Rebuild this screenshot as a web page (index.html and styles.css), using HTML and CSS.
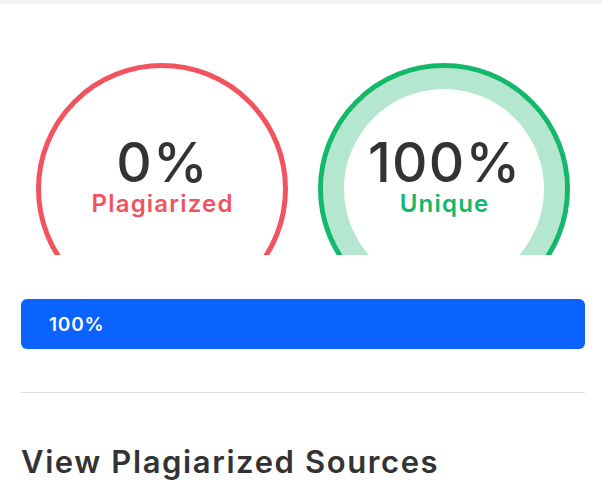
FILE: index.html
```html
<!DOCTYPE html>
<html lang="en">
<head>
<meta charset="utf-8">
<title>Plagiarism Report</title>
<link rel="stylesheet" href="styles.css">
</head>
<body>
<div class="topband"></div>
<main class="report">
  <section class="gauges">
    <div class="gauge">
      <div class="ring ring-red">
        <div class="value">0%</div>
        <div class="label label-red">Plagiarized</div>
      </div>
    </div>
    <div class="gauge">
      <div class="ring ring-green">
        <div class="value">100%</div>
        <div class="label label-green">Unique</div>
      </div>
    </div>
  </section>
  <div class="bar"><span class="bar-text">100%</span></div>
  <hr class="divider">
  <h2 class="heading">View Plagiarized Sources</h2>
</main>
</body>
</html>
```
FILE: styles.css
```css
html, body {
  margin: 0;
  padding: 0;
  background: #ffffff;
}
body {
  font-family: Inter, "Open Sans", sans-serif;
  color: #333333;
  overflow: hidden;
}
.topband {
  height: 4px;
  background: #f2f3f5;
}
.report {
  padding: 0 17px 0 21px;
}
.gauges {
  display: flex;
  justify-content: center;
  gap: 30px;
  margin-top: 59px;
}
.gauge {
  width: 252px;
  height: 192px;
  overflow: hidden;
}
.ring {
  box-sizing: border-box;
  width: 252px;
  height: 252px;
  border-radius: 50%;
  border: 5px solid;
  display: flex;
  flex-direction: column;
  align-items: center;
  padding-top: 67px;
}
.ring-red {
  border-color: #f2545f;
}
.ring-green {
  border-color: #13b86a;
  box-shadow: inset 0 0 0 21px #b5e7d0;
}
.value {
  font-size: 55px;
  font-weight: 500;
  line-height: 1;
  color: #333333;
  letter-spacing: 1.2px;
  margin-right: -1.2px;
}
.label {
  font-size: 24px;
  font-weight: 600;
  line-height: 1;
  margin-top: 2px;
  letter-spacing: 1.2px;
  margin-right: -1.2px;
}
.label-red { color: #f2545f; }
.label-green { color: #13b86a; }
.bar {
  margin-top: 44px;
  height: 50px;
  border-radius: 6px;
  background: #0a62ff;
  display: flex;
  align-items: center;
  padding-left: 28px;
}
.bar-text {
  color: #ffffff;
  font-size: 19px;
  font-weight: 600;
  letter-spacing: 0.8px;
}
.divider {
  margin: 43px 0 0;
  border: 0;
  height: 1px;
  background: #dcdcdc;
}
.heading {
  margin: 50px 0 0;
  font-size: 31px;
  font-weight: 600;
  line-height: 1.2;
  letter-spacing: 1.6px;
  color: #333333;
}
```
